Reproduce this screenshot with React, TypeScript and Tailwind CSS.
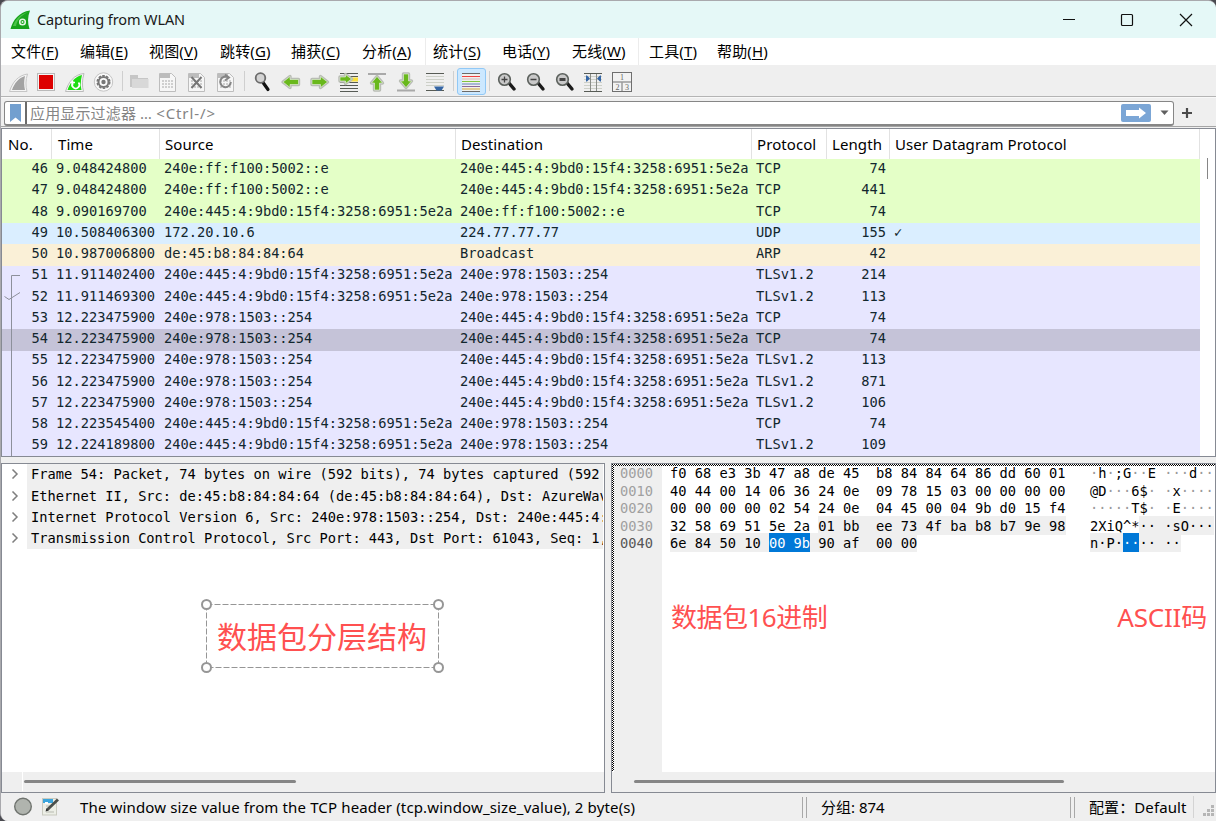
import type { ReactNode } from "react";
import clsx from "clsx";

const menus = [
  { label: "文件", key: "F", width: "w-[69px]" },
  { label: "编辑", key: "E", width: "w-[69px]" },
  { label: "视图", key: "V", width: "w-[71px]" },
  { label: "跳转", key: "G", width: "w-[71px]" },
  { label: "捕获", key: "C", width: "w-[71px]" },
  { label: "分析", key: "A", width: "w-[63px]" },
  { label: "统计", key: "S", width: "w-[77px]", divider: true },
  { label: "电话", key: "Y", width: "w-[70px]" },
  { label: "无线", key: "W", width: "w-[66px]" },
  { label: "工具", key: "T", width: "w-[79px]", divider: true },
  { label: "帮助", key: "H", width: "w-[69px]" },
];

const local = "240e:445:4:9bd0:15f4:3258:6951:5e2a";
const remote = "240e:978:1503::254";
const dns = "240e:ff:f100:5002::e";

const green = "bg-[#e4ffc7]";
const blue = "bg-[#daeeff]";
const cream = "bg-[#faf0d7]";
const lilac = "bg-[#e7e6ff]";
const selected = "bg-[#c5c3d8]";

type Packet = {
  no: number;
  time: string;
  src: string;
  dst: string;
  proto: string;
  len: number;
  udp?: boolean;
  color: string;
  box?: string;
};

const packets: Packet[] = [
  { no: 46, time: "9.048424800", src: dns, dst: local, proto: "TCP", len: 74, color: green },
  { no: 47, time: "9.048424800", src: dns, dst: local, proto: "TCP", len: 441, color: green, box: "h-[22px]" },
  { no: 48, time: "9.090169700", src: local, dst: dns, proto: "TCP", len: 74, color: green },
  { no: 49, time: "10.508406300", src: "172.20.10.6", dst: "224.77.77.77", proto: "UDP", len: 155, udp: true, color: blue },
  { no: 50, time: "10.987006800", src: "de:45:b8:84:84:64", dst: "Broadcast", proto: "ARP", len: 42, color: cream, box: "h-[22px]" },
  { no: 51, time: "11.911402400", src: local, dst: remote, proto: "TLSv1.2", len: 214, color: lilac, box: "h-[21px] leading-[16px]" },
  { no: 52, time: "11.911469300", src: local, dst: remote, proto: "TLSv1.2", len: 113, color: lilac },
  { no: 53, time: "12.223475900", src: remote, dst: local, proto: "TCP", len: 74, color: lilac },
  { no: 54, time: "12.223475900", src: remote, dst: local, proto: "TCP", len: 74, color: selected, box: "h-[22px]" },
  { no: 55, time: "12.223475900", src: remote, dst: local, proto: "TLSv1.2", len: 113, color: lilac, box: "h-[21px] leading-[16px]" },
  { no: 56, time: "12.223475900", src: remote, dst: local, proto: "TLSv1.2", len: 871, color: lilac },
  { no: 57, time: "12.223475900", src: remote, dst: local, proto: "TLSv1.2", len: 106, color: lilac },
  { no: 58, time: "12.223545400", src: local, dst: remote, proto: "TCP", len: 74, color: lilac },
  { no: 59, time: "12.224189800", src: local, dst: remote, proto: "TLSv1.2", len: 109, color: lilac },
];

const columns = [
  { label: "No.", cls: "w-[50px] pl-[6px]" },
  { label: "Time", cls: "w-[108px] pl-[6px]" },
  { label: "Source", cls: "w-[296px] pl-[5px]" },
  { label: "Destination", cls: "w-[296px] pl-[5px]" },
  { label: "Protocol", cls: "w-[75px] pl-[5px]" },
  { label: "Length", cls: "w-[63px] pl-[5px]" },
  { label: "User Datagram Protocol", cls: "w-[310px] pl-[5px]" },
];

const details = [
  "Frame 54: Packet, 74 bytes on wire (592 bits), 74 bytes captured (592",
  "Ethernet II, Src: de:45:b8:84:84:64 (de:45:b8:84:84:64), Dst: AzureWav",
  "Internet Protocol Version 6, Src: 240e:978:1503::254, Dst: 240e:445:4:",
  "Transmission Control Protocol, Src Port: 443, Dst Port: 61043, Seq: 1,",
];

const mono = "font-['DejaVu_Sans_Mono','Noto_Sans_CJK_SC',monospace] text-[13.69px]";

function Slot({ children }: { children: ReactNode }) {
  return (
    <svg className="h-[28px] w-[29px] shrink-0" viewBox="0 0 29 28" fill="none">
      {children}
    </svg>
  );
}

function Divider() {
  return <div className="mx-auto h-5 w-px shrink-0 bg-[#cfcfcf]" />;
}

function Page() {
  return (
    <>
      <path d="M5.5 5.5h12l4 4v14h-16z" fill="#f6f6f6" stroke="#bdbdbd" />
      <path d="M6 6h10v4H6z" fill="#bcbcbc" />
      <path d="M8 13h11M8 16h11M8 19h11" stroke="#cfcfcf" strokeWidth="2" strokeDasharray="2 1" />
    </>
  );
}

const arrowFill = "#69b81c";

function Arrow({ d }: { d: string }) {
  return (
    <>
      <path d={d} stroke="#b9bdb5" strokeWidth="3.4" strokeLinejoin="round" />
      <path d={d} fill={arrowFill} stroke="#e9f3df" strokeWidth="0.6" />
    </>
  );
}

function Magnifier({ sign }: { sign: "plus" | "minus" | "equal" }) {
  return (
    <Slot>
      <path d="M17 15l5 6" stroke="#1c1c1c" strokeWidth="3.4" strokeLinecap="round" />
      <circle cx="12.5" cy="11.5" r="5.8" fill="#c9c9c9" stroke="#5b605c" strokeWidth="1.6" />
      {sign === "plus" && <path d="M9.5 11.5h6M12.5 8.5v6" stroke="#444" strokeWidth="1.3" />}
      {sign === "minus" && <path d="M9.5 11.5h6" stroke="#444" strokeWidth="1.4" />}
      {sign === "equal" && <path d="M9.5 11.5h6" stroke="#444" strokeWidth="3" />}
    </Slot>
  );
}

function Toolbar() {
  return (
    <div className="flex h-[31px] items-start bg-[#efefef] pl-[2px] pt-[3px]">
      <Slot>
        <path d="M6.5 23.5C9.5 14 15 7.5 24.5 6C22.5 12 22.5 18 24 23.5z" fill="#f4f4f4" stroke="#c6c6c6" />
        <path d="M9 22C11.5 15 15.5 10 22 8C20.8 13 21 18 22 22z" fill="#a3a3a3" />
      </Slot>
      <Slot>
        <rect x="5.5" y="5.5" width="17" height="17" fill="#f4f4f4" stroke="#b9b9b9" />
        <rect x="7" y="7" width="14" height="14" fill="#dd0000" />
      </Slot>
      <Slot>
        <path d="M4.500 23.500C7.500 14 13 6.500 23 5.500C21 12 21 18 22.500 23.500z" fill="#f6f6f6" stroke="#bcbcbc" />
        <path d="M6.500 22C9 14.500 14 8.500 21 7C19.500 13 19.500 18 20.500 22z" fill="#1fdc12" />
        <path d="M12 14.500a3.600 3.600 0 1 0 5.500 0M11.500 12.500v4.500M9.500 14.500h4.500" stroke="#fff" strokeWidth="1.700" />
      </Slot>
      <Slot>
        <circle cx="13.500" cy="14" r="9.200" fill="#fafafa" stroke="#c4c4c4" />
        <circle cx="13.500" cy="14" r="6.300" stroke="#777" strokeWidth="1.500" strokeDasharray="2.600 1.350" />
        <circle cx="13.500" cy="14" r="5" stroke="#777" strokeWidth="2" />
        <circle cx="13.500" cy="14" r="2.200" fill="#777" />
      </Slot>
      <div className="flex w-[6px] pt-[3px]"><Divider /></div>
      <Slot>
        <path d="M5 7h8v3h10v9H5z" fill="#c6c6c6" />
        <path d="M7 11h16.500v9H7z" fill="#d8d8d8" />
      </Slot>
      <Slot><Page /></Slot>
      <Slot>
        <Page />
        <path d="M8.500 9l10 11M18.500 9l-10 11" stroke="#777" strokeWidth="2" />
      </Slot>
      <Slot>
        <Page />
        <path d="M16.500 9.500a5.300 5.300 0 1 0 2.300 4.500M13 6.500l4 3-4 3" stroke="#858585" strokeWidth="2" />
      </Slot>
      <div className="flex w-[6px] pt-[3px]"><Divider /></div>
      <Slot>
        <path d="M16 14.500l5 7" stroke="#111" strokeWidth="3.200" strokeLinecap="round" />
        <circle cx="13.500" cy="10" r="4.800" fill="#d3d3d3" stroke="#6b6b6b" strokeWidth="1.800" />
      </Slot>
      <Slot><Arrow d="M7 14l7-5.500v3h8.500v5H14v3z" /></Slot>
      <Slot><Arrow d="M22.500 14l-7-5.500v3H7v5h8.500v3z" /></Slot>
      <Slot>
        <path d="M6 5.500h18M6 8.500h18M6 14.500h18M6 17.500h18M6 20.500h18M6 23.500h18" stroke="#575b55" />
        <path d="M17 9.500h7v4h-7z" fill="#fae03a" />
        <Arrow d="M17.500 11l-6-4.500V9H6v4h5.500v2.500z" />
      </Slot>
      <Slot>
        <path d="M5 6h18" stroke="#a9a9a9" strokeWidth="2" />
        <Arrow d="M14 8.500l5.500 6.500h-3v7h-5v-7h-3z" />
      </Slot>
      <Slot>
        <path d="M5 22.500h18" stroke="#a9a9a9" strokeWidth="2" />
        <Arrow d="M14 19.500l5.500-6.500h-3V6h-5v7h-3z" />
      </Slot>
      <Slot>
        <path d="M5 5.500h18M5 22.500h18" stroke="#575b55" />
        <path d="M5 8.500h18M5 11.500h18M5 14.500h18M5 17.500h18" stroke="#cdd0c8" />
        <path d="M13 18.500h10l-2.500 4h-5z" fill="#3465a4" />
      </Slot>
      <div className="flex w-[7px] pt-[3px]"><Divider /></div>
      <div className="h-[27px] w-[29px] shrink-0 rounded-[3px] border border-[#90c8f6] bg-[#cce8ff]">
        <svg className="h-[25px] w-[27px]" viewBox="0 0 27 25" fill="none">
          <path d="M4 5h18v17H4z" fill="#f1f1ee" />
          <path d="M4 4.500h18M4 22.500h18" stroke="#6a6a6a" />
          <path d="M4 7.500h18" stroke="#ee4040" />
          <path d="M4 10h18" stroke="#d2b8b8" />
          <path d="M4 12.500h18" stroke="#7fc440" />
          <path d="M4 15h18" stroke="#6080bc" />
          <path d="M4 17.500h18" stroke="#8a6a9c" />
          <path d="M4 20h18" stroke="#d0a838" />
        </svg>
      </div>
      <div className="flex w-[6px] pt-[3px]"><Divider /></div>
      <Magnifier sign="plus" />
      <Magnifier sign="minus" />
      <Magnifier sign="equal" />
      <Slot>
        <path d="M5 5.500h18M5 23.500h18" stroke="#575b55" />
        <path d="M5 8.500h18M5 11.500h18M5 14.500h18M5 17.500h18M5 20.500h18" stroke="#cdd0c8" />
        <path d="M11.500 6v17M17.500 6v17" stroke="#8a8d88" />
        <path d="M7 7.500h1l3 3-3 3H7zM22 7.500h-1l-3 3 3 3h1z" fill="#3465a4" />
      </Slot>
      <Slot>
        <rect x="4.500" y="4.500" width="19" height="19" fill="#f2f2f2" stroke="#6f6f6f" />
        <path d="M5 14h18M14 14v9" stroke="#9b9b9b" strokeWidth="1.500" />
        <g fill="#666" fontFamily="Liberation Serif, serif" fontSize="8" textAnchor="middle">
          <text x="14" y="12">1</text>
          <text x="9.500" y="22">2</text>
          <text x="19" y="22">3</text>
        </g>
      </Slot>
    </div>
  );
}

function TitleBar() {
  return (
    <div className="flex h-[37px] items-center bg-[#e5f8f7] pl-[9px]">
      <svg className="h-[20px] w-[21px]" viewBox="0 0 21 20">
        <path d="M0.500 19C3 10 9 2 20 0.500C17.500 7 17.500 13 19.500 19z" fill="#18a31c" />
        <path d="M3 16C5 10 10 4 18 2C10 6 7 11 6 16z" fill="#4cc44a" />
        <circle cx="12.500" cy="12" r="2.800" fill="none" stroke="#e3f6e1" strokeWidth="1.600" />
        <circle cx="12.500" cy="12" r="1" fill="#e3f6e1" />
      </svg>
      <div className="ml-[6px] text-[14.500px] tracking-[-0.100px] text-[#191919]">Capturing from WLAN</div>
      <svg className="ml-auto mr-[22px] h-[16px] w-[132px]" viewBox="0 0 132 16" fill="none" stroke="#111" strokeWidth="1.200">
        <path d="M1 7.500h12" />
        <rect x="59.500" y="2.500" width="11" height="11" rx="1" />
        <path d="M118 2l12 12M130 2l-12 12" />
      </svg>
    </div>
  );
}

function MenuBar() {
  return (
    <div className="flex h-[27px] items-center bg-white pl-[10px] text-[15px] tracking-[0.150px] text-black">
      {menus.map((menu) => (
        <div
          key={menu.key}
          className={clsx("flex h-full shrink-0 items-center whitespace-nowrap", menu.width, menu.divider && "border-l border-[#ececec]", menu.key === "S" && "pl-[7px]", menu.key === "T" && "pl-[10px]")}
        >
          {menu.label}(<span className="underline underline-offset-2">{menu.key}</span>)
        </div>
      ))}
    </div>
  );
}

function FilterBar() {
  return (
    <div className="flex h-[31px] items-start border-t border-[#b4b4b4] bg-[#efefef] pl-[3px] pt-[4px] shadow-[inset_0_1px_0_#f8f8f8]">
      <div className="flex h-[25px] w-[1170px] items-center rounded-[3px] border border-b-2 border-[#868686] bg-white">
        <div className="flex h-full w-[22px] items-center justify-center border-r-2 border-[#6b6b6b]">
          <svg className="h-[18px] w-[11px]" viewBox="0 0 11 18">
            <path d="M0 0h11v18l-5.500-4.500L0 18z" fill="#729fcf" />
          </svg>
        </div>
        <div className="ml-[3px] pt-[1px] text-[15px] tracking-[0.150px] text-[#848484]">
          应用显示过滤器 … <span className="tracking-[0.900px]">&lt;Ctrl-/&gt;</span>
        </div>
        <svg className="ml-auto h-[18px] w-[30px]" viewBox="0 0 30 18">
          <rect width="30" height="18" rx="2" fill="#7ba6d6" />
          <path d="M5 6h13V3.500l7 5.500-7 5.500V12H5z" fill="#fff" />
        </svg>
        <svg className="ml-[9px] mr-[4px] h-[6px] w-[9px]" viewBox="0 0 9 6">
          <path d="M0.500 0.500h8l-4 4.500z" fill="#5f5f5f" />
        </svg>
      </div>
      <svg className="ml-[7px] mt-[6px] h-[12px] w-[12px]" viewBox="0 0 12 12">
        <path d="M1 6h10M6 1v10" stroke="#4a4a4a" strokeWidth="2.200" />
      </svg>
    </div>
  );
}

function PacketList() {
  return (
    <section className="relative h-[329px] overflow-hidden border border-[#868a93] bg-white">
      <div className="flex h-[30px] text-[15px] tracking-[0.080px] text-black">
        {columns.map((col) => (
          <div key={col.label} className={clsx("flex shrink-0 items-center whitespace-nowrap border-r border-[#e2e2e2]", col.cls)}>
            {col.label}
          </div>
        ))}
      </div>
      <div className={clsx(mono, "w-[1198px] text-[#12272e]")}>
        {packets.map((p) => (
          <div key={p.no} className={clsx("flex whitespace-pre", p.color, p.box ?? "h-[21px]", !p.box?.includes("leading") && "leading-[18px]")}>
            <div className="w-[46px] shrink-0 text-right">{p.no}</div>
            <div className="w-[108px] shrink-0 pl-[8px]">{p.time}</div>
            <div className="w-[296px] shrink-0 pl-[8px]">{p.src}</div>
            <div className="w-[296px] shrink-0 pl-[8px]">{p.dst}</div>
            <div className="w-[75px] shrink-0 pl-[8px]">{p.proto}</div>
            <div className="w-[63px] shrink-0 text-right">{p.len}</div>
            {p.udp && <div className="pl-[8px] text-[14px]">✓</div>}
          </div>
        ))}
      </div>
      <svg className="absolute left-0 top-[146px] h-[182px] w-[20px]" viewBox="0 0 20 182" fill="none" stroke="#8d909b">
        <path d="M18 0.500H9.500V182M2.500 21.500l4.500 3 11-7" />
      </svg>
      <div className="absolute right-[7px] top-[29px] h-[21px] w-px bg-[#868686]" />
    </section>
  );
}

function PacketDetails() {
  return (
    <section className="relative flex h-[330px] w-[604px] shrink-0 flex-col overflow-hidden border border-[#868a93] bg-white">
      {details.map((line, i) => (
        <div key={line} className={clsx("flex shrink-0 whitespace-pre", i === 0 ? "h-[22px]" : "h-[21px]")}>
          <svg className="mt-[5px] ml-[9px] h-[10px] w-[16px] shrink-0" viewBox="0 0 16 10" fill="none">
            <path d="M1.500 0.500L6 5l-4.500 4.500" stroke="#7f7f7f" strokeWidth="1.500" />
          </svg>
          <div className={clsx(mono, "mr-[1px] flex-1 overflow-hidden bg-[#efefef] pl-[4px] leading-[20px] text-black")}>{line}</div>
        </div>
      ))}
      <div className="absolute left-[204px] top-[140px] flex h-[64px] w-[233px] items-center justify-center pt-[1px] pr-[1px] text-[30px] text-[#ff5050]">
        <svg className="absolute inset-0 h-full w-full" fill="none">
          <rect x="0.500" y="0.500" width="232" height="63" stroke="#969696" strokeDasharray="6 2" />
        </svg>
        数据包分层结构
        <i className="absolute -left-[5px] -top-[5px] size-[11px] rounded-full border-2 border-[#969696] bg-white" />
        <i className="absolute -right-[5px] -top-[5px] size-[11px] rounded-full border-2 border-[#969696] bg-white" />
        <i className="absolute -bottom-[5px] -left-[5px] size-[11px] rounded-full border-2 border-[#969696] bg-white" />
        <i className="absolute -bottom-[5px] -right-[5px] size-[11px] rounded-full border-2 border-[#969696] bg-white" />
      </div>
      <div className="mt-auto flex h-[20px] items-center bg-[#efefef] pb-[2px]">
        <div className="h-[20px] w-px translate-x-[20px] bg-white" />
        <div className="ml-[21px] h-[3px] w-[272px] rounded-full bg-[#868686]" />
      </div>
    </section>
  );
}

function Dots({ children }: { children: ReactNode }) {
  return <span className="text-[#9a9a9a]">{children}</span>;
}

function Mark({ children }: { children: ReactNode }) {
  return <span className="bg-[#efefef] pb-[1px] pt-[2px]">{children}</span>;
}

function Picked({ children }: { children: ReactNode }) {
  return <span className="bg-[#0078d7] pb-[1px] pt-[2px] text-white">{children}</span>;
}

// Dots that stand for unprintable bytes are dimmed outside the current field
function ascii(text: string) {
  return text.split(/(·+)/).map((part, i) => (part.startsWith("·") ? <Dots key={i}>{part}</Dots> : part));
}

const dump: { offset: string; hex: ReactNode; text: ReactNode; height: string }[] = [
  { offset: "0000", hex: "f0 68 e3 3b 47 a8 de 45  b8 84 84 64 86 dd 60 01", text: ascii("·h·;G··E ···d··"), height: "h-[18px]" },
  { offset: "0010", hex: "40 44 00 14 06 36 24 0e  09 78 15 03 00 00 00 00", text: ascii("@D···6$· ·x····"), height: "h-[17px]" },
  { offset: "0020", hex: "00 00 00 00 02 54 24 0e  04 45 00 04 9b d0 15 f4", text: ascii("·····T$· ·E····"), height: "h-[18px]" },
  { offset: "0030", hex: <>32 58 69 51 5e 2a <Mark>01 bb  ee 73 4f ba b8 b7 9e 98</Mark></>, text: <>2XiQ^*<Mark>·· ·sO···</Mark></>, height: "h-[17px]" },
  {
    offset: "0040",
    hex: <><Mark>6e 84 50 10 </Mark><Picked>00 9b</Picked><Mark> 90 af  00 00</Mark></>,
    text: <><Mark>n·P·</Mark><Picked>··</Picked><Mark>·· ··</Mark></>,
    height: "h-[18px]",
  },
];

function PacketBytes() {
  return (
    <section className="relative flex h-[330px] flex-1 flex-col overflow-hidden border border-[#868a93] bg-white">
      <svg className="absolute left-0 top-0 h-[307px] w-full">
        <defs>
          <pattern id="focus" width="2" height="2" patternUnits="userSpaceOnUse">
            <path d="M0 0h1v1H0zM1 1h1v1H1z" fill="#000" />
          </pattern>
        </defs>
        <rect width="100%" height="2" fill="url(#focus)" />
        <rect width="2" height="307" fill="url(#focus)" />
      </svg>
      <div className={clsx(mono, "ml-[2px] mt-[2px] flex flex-1 whitespace-pre leading-[15px]")}>
        <div className="w-[48px] shrink-0 bg-[#efefef] pl-[6px] text-[#a0a0a0]">
          {dump.map((row) => (
            <div key={row.offset} className={clsx(row.height, row.offset === "0040" && "text-[#565656]")}>{row.offset}</div>
          ))}
        </div>
        <div className="w-[428px] shrink-0 pl-[8px] text-black">
          {dump.map((row) => <div key={row.offset} className={row.height}>{row.hex}</div>)}
        </div>
        <div className="w-[124px] shrink-0 text-black">
          {dump.map((row) => <div key={row.offset} className={row.height}>{row.text}</div>)}
        </div>
      </div>
      <div className="absolute left-[59px] top-[134px] text-[26px] tracking-[-0.500px] text-[#ff5050]">数据包16进制</div>
      <div className="absolute right-[8px] top-[134px] text-[26px] tracking-[-0.200px] text-[#ff5050]">ASCII码</div>
      <div className="flex h-[20px] shrink-0 items-center bg-[#efefef] pb-[2px]">
        <div className="ml-[22px] h-[3px] w-[430px] rounded-full bg-[#868686]" />
      </div>
    </section>
  );
}

function Grooves() {
  return <div className="h-[21px] w-[5px] shrink-0 border-x border-[#a8a8a8]" />;
}

function StatusBar() {
  return (
    <div className="flex h-[28px] items-center whitespace-nowrap bg-[#efefef] pl-[12px] text-[15px] text-black">
      <svg className="h-[20px] w-[20px] shrink-0" viewBox="0 0 20 20">
        <circle cx="10" cy="9.500" r="8.300" fill="#b0b4ae" stroke="#6f736e" strokeWidth="1.400" />
      </svg>
      <svg className="ml-[8px] h-[20px] w-[20px] shrink-0" viewBox="0 0 20 20">
        <rect x="1.500" y="1.500" width="14" height="16.500" fill="#eceee6" stroke="#c9cabf" />
        <path d="M2 2h10v4H2z" fill="#3ba5dc" />
        <path d="M4 5h3v2H4z" fill="#fff" />
        <path d="M5 9h7M5 12h4M5 15h8" stroke="#b7b9b0" />
        <path d="M6 13L17 2.500" stroke="#4b4f4b" strokeWidth="2.800" />
        <path d="M4.500 14.500l1-3 2 2z" fill="#2b2b2b" />
      </svg>
      <div className="ml-[19px] w-[722px] tracking-[0.145px]">The window size value from the TCP header (tcp.window_size_value), 2 byte(s)</div>
      <Grooves />
      <div className="ml-[14px] w-[249px]">分组: 874</div>
      <Grooves />
      <div className="ml-[14px] w-[104px] tracking-[0.100px]">配置：Default</div>
      <div className="h-[22px] w-px bg-[#d4d4d4]" />
      <svg className="ml-auto mt-[8px] h-[14px] w-[14px]" viewBox="0 0 14 14" fill="#b5b5b5">
        <path d="M9 1h3v3H9zM5 5h3v3H5zM9 5h3v3H9zM1 9h3v3H1zM5 9h3v3H5zM9 9h3v3H9z" />
      </svg>
    </div>
  );
}

export default function App() {
  return (
    <div className="h-[821px] w-[1216px] overflow-hidden bg-[#4a4a50] font-['Noto_Sans','Noto_Sans_CJK_SC',sans-serif]">
      <div className="flex h-full flex-col overflow-hidden rounded-t-[8px] rounded-bl-[8px] border-l border-t border-[#a9a9ad] bg-[#efefef]">
        <TitleBar />
        <MenuBar />
        <Toolbar />
        <FilterBar />
        <div className="-mt-px mb-px h-px bg-[#a5a5a5]" />
        <PacketList />
        <div className="mt-[6px] flex gap-[6px]">
          <PacketDetails />
          <PacketBytes />
        </div>
        <StatusBar />
      </div>
    </div>
  );
}
